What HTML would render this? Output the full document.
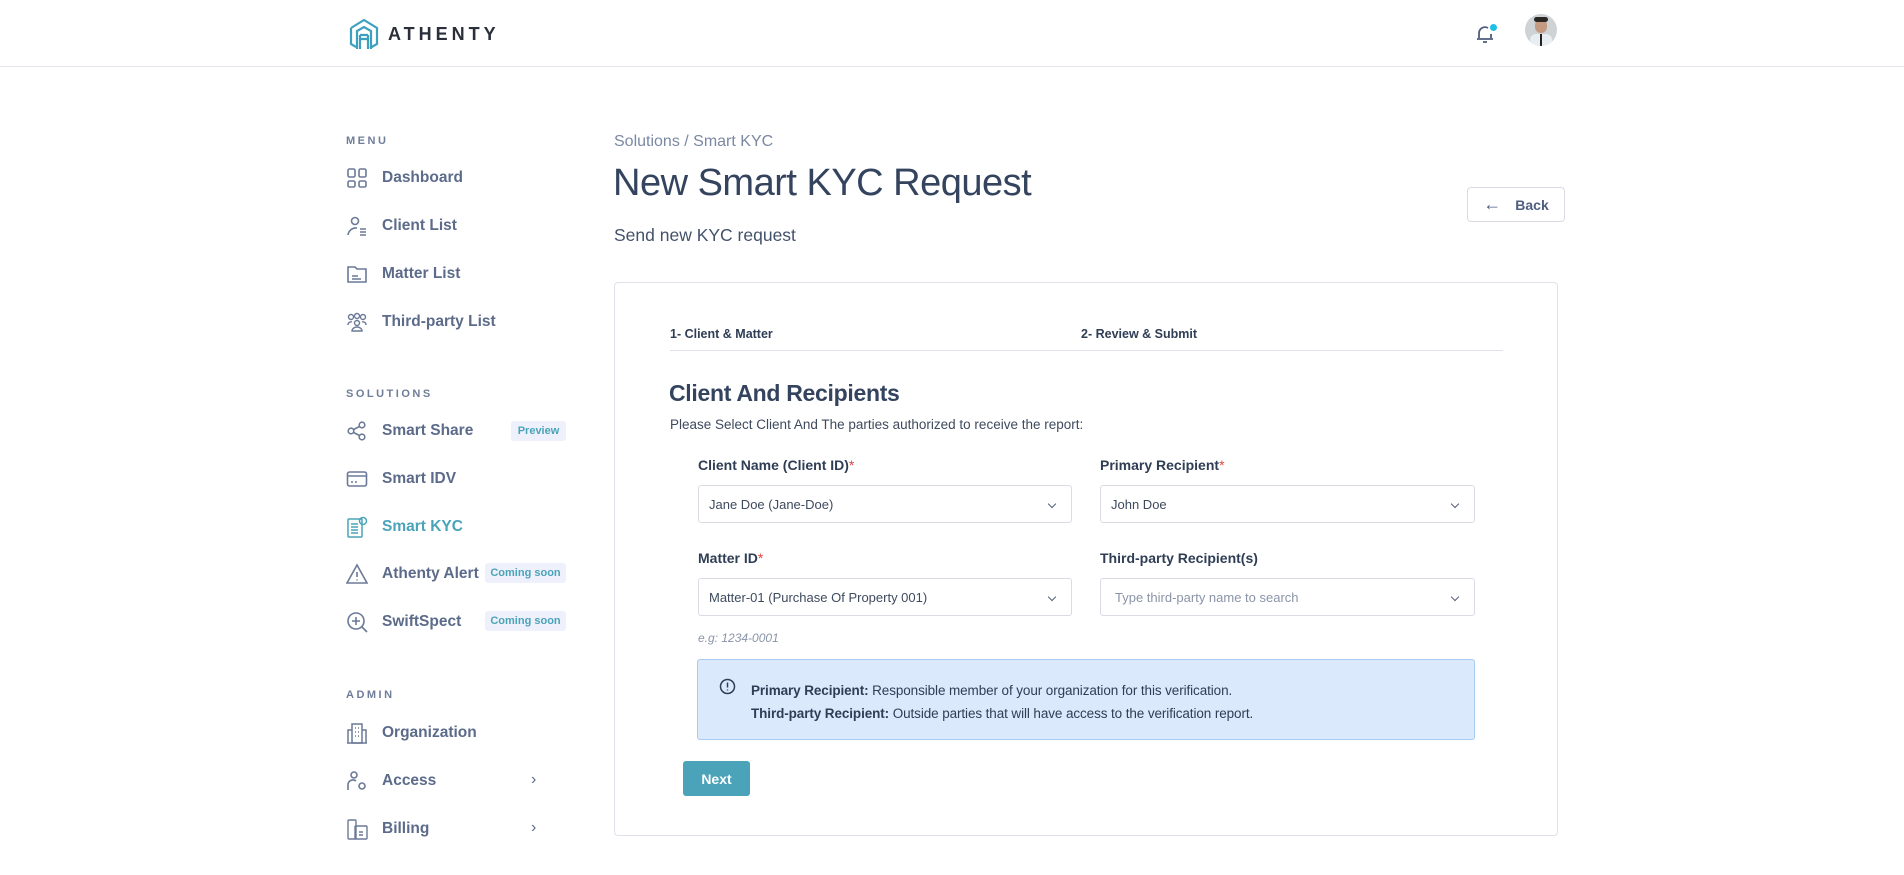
<!DOCTYPE html>
<html><head><meta charset="utf-8"><style>
*{box-sizing:border-box;margin:0;padding:0}
body{width:1904px;height:875px;overflow:hidden;background:#fff;font-family:"Liberation Sans",sans-serif;color:#34435e;position:relative}
.abs{position:absolute}
.hdr{left:0;top:0;width:1904px;height:67px;border-bottom:1px solid #e4e7ee}
.logo{left:348px;top:18px}
.brand{left:388px;top:24px;font-size:18px;font-weight:700;letter-spacing:4px;color:#2a2f3a}
.sec{font-size:11px;font-weight:700;letter-spacing:2.5px;color:#6f7d98}
.item{left:346px;height:24px;display:flex;align-items:center;font-size:15.5px;font-weight:600;color:#5c6b8a}
.item svg{width:22px;height:22px;margin-right:14px;flex:none}
.badge{position:absolute;height:20px;line-height:20px;font-size:11px;font-weight:600;color:#4aa3b8;background:#eef1fb;border-radius:3px;text-align:center}
.chev{position:absolute;left:531px;font-size:16px;color:#5c6b8a}
.card{left:614px;top:282px;width:944px;height:554px;border:1px solid #dfe2ec;border-radius:4px}
.lbl{font-size:14px;font-weight:600;color:#2f3d55}
.lbl b{color:#e0463c;font-weight:400}
.sel{height:38px;border:1px solid #d9dce6;border-radius:3px;font-size:13px;color:#3e4a5e;padding-left:10px;display:flex;align-items:center}
.sel:after{content:"";position:absolute;right:16px;top:15px;width:5px;height:5px;border-right:1.3px solid #55607a;border-bottom:1.3px solid #55607a;transform:rotate(45deg)}
</style></head><body>
<div class="abs hdr"></div>
<svg class="abs logo" width="32" height="32" viewBox="0 0 32 32" fill="none" stroke="#3ea0c0" stroke-width="2.2">
<path d="M3 10 L16 2 L29 10 V26 L22 30"/><path d="M3 10 V26 L8 29"/><path d="M9 31 V13 L16 9 L23 13 V31"/><path d="M12 17 H20 M12 21 H20 M12 17 V31 M20 17 V31"/></svg>
<div class="abs brand">ATHENTY</div>
<svg class="abs" style="left:1475px;top:24px" width="20" height="20" viewBox="0 0 20 20" fill="none" stroke="#4f5d7e" stroke-width="1.8"><path d="M4 14 V9 a6 6 0 0 1 9-5"/><path d="M16 10 V14 M2 15 H18 M8 18 H12"/></svg>
<div class="abs" style="left:1490px;top:24px;width:7px;height:7px;border-radius:50%;background:#1ec0e8"></div>
<div class="abs" style="left:1525px;top:14px;width:32px;height:32px;border-radius:50%;background:#cfd3d6;overflow:hidden">
<div class="abs" style="left:10px;top:5px;width:12px;height:14px;border-radius:6px;background:#c49a82"></div>
<div class="abs" style="left:9px;top:3px;width:14px;height:5px;border-radius:4px;background:#2a2624"></div>
<div class="abs" style="left:5px;top:20px;width:22px;height:14px;border-radius:6px 6px 0 0;background:#e8eef2"></div>
<div class="abs" style="left:15px;top:20px;width:2px;height:12px;background:#222"></div></div>

<div class="abs sec" style="left:346px;top:135px">MENU</div>
<div class="abs item" style="top:166px"><svg viewBox="0 0 22 22" fill="none" stroke="#6b7a98" stroke-width="1.6"><rect x="2" y="2" width="7" height="8" rx="1.5"/><rect x="13" y="2" width="7" height="8" rx="1.5"/><rect x="2" y="14" width="7" height="6" rx="1.5"/><rect x="13" y="14" width="7" height="6" rx="1.5"/></svg>Dashboard</div>
<div class="abs item" style="top:214px"><svg viewBox="0 0 22 22" fill="none" stroke="#6b7a98" stroke-width="1.6"><circle cx="9" cy="6" r="3.5"/><path d="M2 20 a8 8 0 0 1 9-7"/><path d="M14 14 H20 M14 17 H20 M14 20 H20"/></svg>Client List</div>
<div class="abs item" style="top:262px"><svg viewBox="0 0 22 22" fill="none" stroke="#6b7a98" stroke-width="1.6"><path d="M2 4 H9 L11 6 H20 V19 H2 Z"/><path d="M6 13 H12 M6 16 H15"/></svg>Matter List</div>
<div class="abs item" style="top:310px"><svg viewBox="0 0 22 22" fill="none" stroke="#6b7a98" stroke-width="1.4"><circle cx="5" cy="6" r="2.5"/><circle cx="11" cy="5" r="2.5"/><circle cx="17" cy="6" r="2.5"/><circle cx="11" cy="12" r="2.5"/><path d="M2 14 a3 3 0 0 1 4-3 M20 14 a3 3 0 0 0-4-3 M6 20 a5 4 0 0 1 10 0 Z"/></svg>Third-party List</div>

<div class="abs sec" style="left:346px;top:388px">SOLUTIONS</div>
<div class="abs item" style="top:419px"><svg viewBox="0 0 22 22" fill="none" stroke="#6b7a98" stroke-width="1.6"><circle cx="5" cy="11" r="2.8"/><circle cx="16" cy="5" r="2.8"/><circle cx="16" cy="17" r="2.8"/><path d="M7.5 9.5 L13.5 6.5 M7.5 12.5 L13.5 15.5"/></svg>Smart Share</div>
<div class="badge" style="left:511px;top:421px;width:55px">Preview</div>
<div class="abs item" style="top:467px"><svg viewBox="0 0 22 22" fill="none" stroke="#6b7a98" stroke-width="1.6"><rect x="1.5" y="4" width="19" height="14" rx="2"/><path d="M1.5 8 H20.5 M5 14 H7 M9 14 H11"/></svg>Smart IDV</div>
<div class="abs item" style="top:515px;color:#4aa3b8"><svg viewBox="0 0 22 22" fill="none" stroke="#4aa3b8" stroke-width="1.5"><rect x="2" y="3" width="14" height="18" rx="1"/><circle cx="17" cy="5" r="3.5"/><path d="M5 8 H12 M5 11 H12 M5 14 H12 M5 17 H12"/></svg>Smart KYC</div>
<div class="abs item" style="top:562px"><svg viewBox="0 0 22 22" fill="none" stroke="#6b7a98" stroke-width="1.6"><path d="M11 2 L21 20 H1 Z"/><path d="M11 9 V14 M11 16.5 V17.5"/></svg>Athenty Alert</div>
<div class="badge" style="left:485px;top:563px;width:81px">Coming soon</div>
<div class="abs item" style="top:610px"><svg viewBox="0 0 22 22" fill="none" stroke="#6b7a98" stroke-width="1.6"><circle cx="10" cy="10" r="8"/><path d="M16 16 L21 21 M10 6 V14 M6 10 H14"/></svg>SwiftSpect</div>
<div class="badge" style="left:485px;top:611px;width:81px">Coming soon</div>

<div class="abs sec" style="left:346px;top:689px">ADMIN</div>
<div class="abs item" style="top:721px"><svg viewBox="0 0 22 22" fill="none" stroke="#6b7a98" stroke-width="1.5"><rect x="6" y="2" width="10" height="19"/><path d="M2 21 V8 H6 M16 8 H20 V21 M1 21 H21 M9 6 H10 M12 6 H13 M9 10 H10 M12 10 H13 M9 14 H10 M12 14 H13"/></svg>Organization</div>
<div class="abs item" style="top:769px"><svg viewBox="0 0 22 22" fill="none" stroke="#6b7a98" stroke-width="1.6"><circle cx="8" cy="5" r="3"/><path d="M2 20 V15 a5 5 0 0 1 8-4"/><circle cx="16" cy="16" r="3"/></svg>Access</div>
<div class="chev" style="top:771px">›</div>
<div class="abs item" style="top:817px"><svg viewBox="0 0 22 22" fill="none" stroke="#6b7a98" stroke-width="1.4"><rect x="2" y="2" width="8" height="19" rx="1"/><rect x="9" y="8" width="12" height="13" rx="1"/><path d="M13 14 H17 M13 17 H17"/></svg>Billing</div>
<div class="chev" style="top:819px">›</div>

<div class="abs" style="left:614px;top:133px;font-size:16px;color:#7b88a3">Solutions / Smart KYC</div>
<div class="abs" style="left:613px;top:162px;font-size:38px;color:#34435e;letter-spacing:-0.5px">New Smart KYC Request</div>
<div class="abs" style="left:614px;top:225px;font-size:17.5px;color:#44516b">Send new KYC request</div>
<div class="abs" style="left:1467px;top:187px;width:98px;height:35px;border:1px solid #d9dce6;border-radius:4px;font-size:14px;font-weight:600;color:#4f5d7e;display:flex;align-items:center;justify-content:center;gap:14px"><span style="font-size:18px;font-weight:400">←</span>Back</div>

<div class="abs card"></div>
<div class="abs" style="left:670px;top:327px;font-size:12.5px;font-weight:700;color:#2f3d55">1- Client &amp; Matter</div>
<div class="abs" style="left:1081px;top:327px;font-size:12.5px;font-weight:700;color:#2f3d55">2- Review &amp; Submit</div>
<div class="abs" style="left:670px;top:350px;width:833px;height:1px;background:#dfe2ec"></div>
<div class="abs" style="left:669px;top:380px;font-size:23px;font-weight:600;color:#34435e;letter-spacing:-0.3px">Client And Recipients</div>
<div class="abs" style="left:670px;top:417px;font-size:13.5px;color:#3e4a5e">Please Select Client And The parties authorized to receive the report:</div>
<div class="abs lbl" style="left:698px;top:457px">Client Name (Client ID)<b>*</b></div>
<div class="abs lbl" style="left:1100px;top:457px">Primary Recipient<b>*</b></div>
<div class="abs sel" style="left:698px;top:485px;width:374px">Jane Doe (Jane-Doe)</div>
<div class="abs sel" style="left:1100px;top:485px;width:375px">John Doe</div>
<div class="abs lbl" style="left:698px;top:550px">Matter ID<b>*</b></div>
<div class="abs lbl" style="left:1100px;top:550px">Third-party Recipient(s)</div>
<div class="abs sel" style="left:698px;top:578px;width:374px">Matter-01 (Purchase Of Property 001)</div>
<div class="abs sel" style="left:1100px;top:578px;width:375px;color:#8a94a8;padding-left:14px">Type third-party name to search</div>
<div class="abs" style="left:698px;top:631px;font-size:12px;font-style:italic;color:#8a94a8">e.g: 1234-0001</div>
<div class="abs" style="left:697px;top:659px;width:778px;height:81px;background:#dbe9fc;border:1px solid #a9cbf2;border-radius:3px"></div>
<svg class="abs" style="left:719px;top:678px" width="17" height="17" viewBox="0 0 17 17" fill="none" stroke="#2f3d55" stroke-width="1.5"><circle cx="8.5" cy="8.5" r="7"/><path d="M8.5 4.5 V9.5 M8.5 11.5 V12.5"/></svg>
<div class="abs" style="left:751px;top:679px;font-size:13.5px;color:#2f3d55;line-height:23px;letter-spacing:-0.1px"><b>Primary Recipient:</b> Responsible member of your organization for this verification.<br><b>Third-party Recipient:</b> Outside parties that will have access to the verification report.</div>
<div class="abs" style="left:683px;top:761px;width:67px;height:35px;background:#4aa3b8;border-radius:3px;color:#fff;font-size:14px;font-weight:600;display:flex;align-items:center;justify-content:center">Next</div>
</body></html>
